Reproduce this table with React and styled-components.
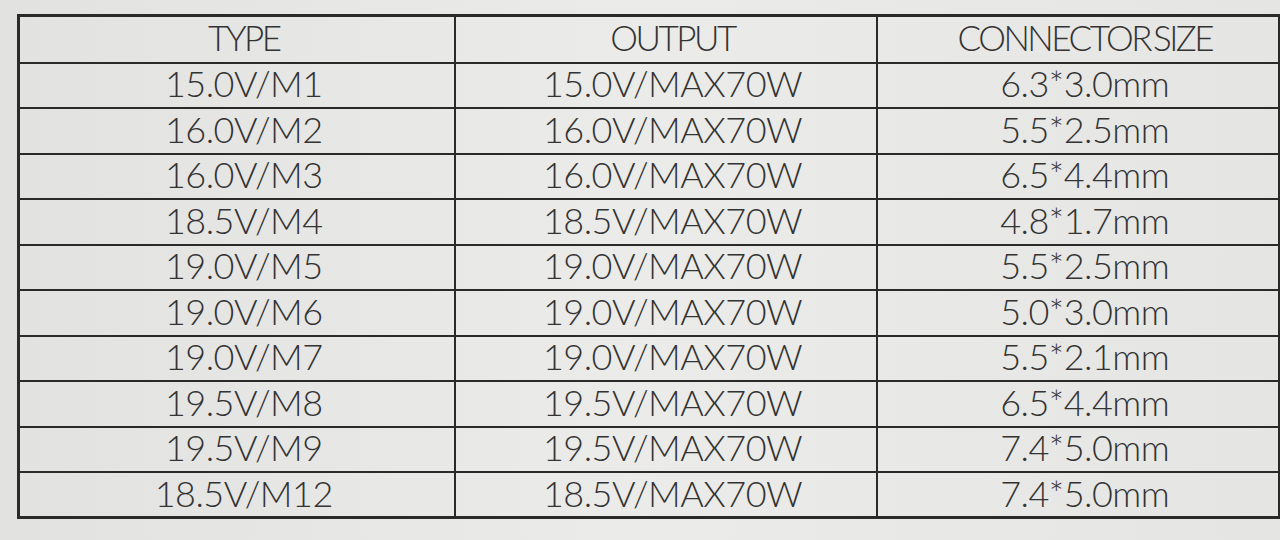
import React from "react";
import styled, { createGlobalStyle } from "styled-components";

const Global = createGlobalStyle`
  html, body { margin: 0; padding: 0; background: #e6e6e4; }
  body { width: 1280px; height: 540px; overflow: hidden; font-family: Lato, "Liberation Sans", sans-serif; }
`;

const Page = styled.div`
  padding: 14px 0 0 17px;
  height: 540px;
  box-sizing: border-box;
  background: linear-gradient(90deg, #e2e2e0 0%, #ebebe9 50%, #e5e5e3 100%);
`;

const Table = styled.table`
  border-collapse: collapse;
  width: 1261px;
  table-layout: fixed;
  border: 3px solid #2a2a2a;
`;

const Col = styled.col`
  width: ${(p) => p.$w}px;
`;

const Cell = styled.td`
  border: 2.5px solid #2a2a2a;
  height: ${(p) => (p.$head ? "47px" : "45.5px")};
  padding: 0 0 ${(p) => (p.$head ? "5px" : "4px")} 14px;
  box-sizing: border-box;
  text-align: center;
  vertical-align: middle;
  color: #333;
  font-weight: 300;
  font-size: ${(p) => (p.$head ? "35px" : "36px")};
  line-height: 38px;
  letter-spacing: ${(p) => (p.$head ? "-2.5px" : "-0.5px")};
  word-spacing: ${(p) => (p.$head ? "-4px" : "0")};
  white-space: nowrap;
`;

const rows = [
  ["15.0V/M1", "15.0V/MAX70W", "6.3*3.0mm"],
  ["16.0V/M2", "16.0V/MAX70W", "5.5*2.5mm"],
  ["16.0V/M3", "16.0V/MAX70W", "6.5*4.4mm"],
  ["18.5V/M4", "18.5V/MAX70W", "4.8*1.7mm"],
  ["19.0V/M5", "19.0V/MAX70W", "5.5*2.5mm"],
  ["19.0V/M6", "19.0V/MAX70W", "5.0*3.0mm"],
  ["19.0V/M7", "19.0V/MAX70W", "5.5*2.1mm"],
  ["19.5V/M8", "19.5V/MAX70W", "6.5*4.4mm"],
  ["19.5V/M9", "19.5V/MAX70W", "7.4*5.0mm"],
  ["18.5V/M12", "18.5V/MAX70W", "7.4*5.0mm"],
];

export default function App() {
  return (
    <>
      <Global />
      <Page>
        <Table>
          <colgroup>
            <Col $w={436} />
            <Col $w={422} />
            <Col $w={403} />
          </colgroup>
          <thead>
            <tr>
              <Cell as="th" $head>TYPE</Cell>
              <Cell as="th" $head>OUTPUT</Cell>
              <Cell as="th" $head>CONNECTOR SIZE</Cell>
            </tr>
          </thead>
          <tbody>
            {rows.map((r, i) => (
              <tr key={i}>
                {r.map((c, j) => (
                  <Cell key={j}>{c}</Cell>
                ))}
              </tr>
            ))}
          </tbody>
        </Table>
      </Page>
    </>
  );
}
